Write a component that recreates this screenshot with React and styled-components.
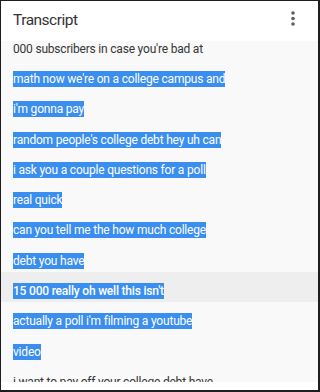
import React from "react";
import styled, { createGlobalStyle } from "styled-components";

const Global = createGlobalStyle`
  html, body { margin: 0; padding: 0; background: #ffffff; }
  body { font-family: Roboto, "Liberation Sans", Arial, sans-serif; }
`;

const Frame = styled.div`
  width: 320px;
  height: 392px;
  box-sizing: border-box;
  border-style: solid;
  border-color: #1e1e1e;
  border-width: 1px 2px 2px 1px;
  display: flex;
  flex-direction: column;
  overflow: hidden;
  background: #ffffff;
`;

const Header = styled.div`
  height: 40px;
  flex: none;
  display: flex;
  align-items: center;
  justify-content: space-between;
  padding: 0 22px 0 12px;
  background: #ffffff;
`;

const Title = styled.div`
  font-size: 15.5px;
  color: #333333;
  letter-spacing: -0.5px;
  margin-top: -3px;
`;

const MenuButton = styled.div`
  width: 6px;
  height: 18px;
  display: flex;
  margin-top: -4px;
`;

const List = styled.div`
  flex: 1;
  background: #f9f9f9;
  overflow: hidden;
`;

const Scroller = styled.div`
  margin-top: -11.4px;
`;

const Row = styled.div`
  height: 30.3px;
  box-sizing: border-box;
  padding: 8px 0 0 12px;
  background: ${(p) => (p.$active ? "#eeeeee" : "transparent")};
`;

const Line = styled.span`
  display: inline-block;
  font-size: 12px;
  letter-spacing: -0.2px;
  line-height: 16px;
  height: 16px;
  white-space: nowrap;
  font-weight: ${(p) => (p.$active ? 500 : 400)};
  color: ${(p) => (p.$selected ? "#ffffff" : "#353535")};
  background: ${(p) => (p.$selected ? "#3a8eef" : "transparent")};
`;

const Footer = styled.div`
  height: 8px;
  flex: none;
  background: #ffffff;
`;

const lines = [
  { t: "000 subscribers in case you're bad at", s: false },
  { t: "math now we're on a college campus and", s: true },
  { t: "i'm gonna pay", s: true },
  { t: "random people's college debt hey uh can", s: true },
  { t: "i ask you a couple questions for a poll", s: true },
  { t: "real quick", s: true },
  { t: "can you tell me the how much college", s: true },
  { t: "debt you have", s: true },
  { t: "15 000 really oh well this isn't", s: true, a: true },
  { t: "actually a poll i'm filming a youtube", s: true },
  { t: "video", s: true },
  { t: "i want to pay off your college debt have", s: false },
];

export default function App() {
  return (
    <>
      <Global />
      <Frame>
        <Header>
          <Title>Transcript</Title>
          <MenuButton>
            <svg width="6" height="18" viewBox="0 0 6 18">
              <circle cx="3" cy="3" r="1.8" fill="#5f5f5f" />
              <circle cx="3" cy="8.5" r="1.8" fill="#5f5f5f" />
              <circle cx="3" cy="14" r="1.8" fill="#5f5f5f" />
            </svg>
          </MenuButton>
        </Header>
        <List>
          <Scroller>
            {lines.map((l, i) => (
              <Row key={i} $active={l.a}>
                <Line $selected={l.s} $active={l.a}>
                  {l.t}
                </Line>
              </Row>
            ))}
          </Scroller>
        </List>
        <Footer />
      </Frame>
    </>
  );
}
